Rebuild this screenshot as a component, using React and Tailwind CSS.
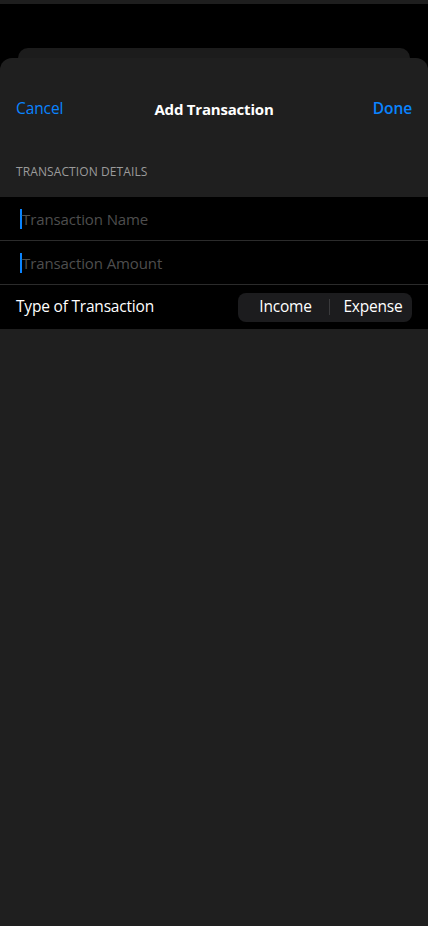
import React from 'react';

const font = { fontFamily: '"Open Sans", "Noto Sans", sans-serif' };

function InputRow({ placeholder }) {
  return (
    <div className="h-[43px] flex items-center pl-5 pt-px">
      <span className="w-[2px] h-5 bg-[#0a84ff]" />
      <span className="text-[15px] text-[#4e4e4e] tracking-[-0.1px]">{placeholder}</span>
    </div>
  );
}

export default function App() {
  return (
    <div className="h-[926px] bg-black flex flex-col overflow-hidden" style={font}>
      <div className="h-1 bg-[#1e1e1e]" />

      {/* stacked sheet behind */}
      <div className="mt-11 mx-[18px] h-[10px] rounded-t-[10px] bg-[#1c1c1c]" />

      {/* Sheet */}
      <div className="flex-1 rounded-t-xl bg-[#1f1f1f]">
        <div className="pt-[29px] px-4 h-[73px] grid grid-cols-[1fr_auto_1fr] items-center">
          <button className="justify-self-start text-[15.5px] text-[#0a84ff] tracking-[-0.1px]">Cancel</button>
          <h1 className="text-[15px] font-bold text-white tracking-[-0.2px]">Add Transaction</h1>
          <button className="justify-self-end text-[15.5px] font-semibold text-[#0a84ff] tracking-[-0.1px]">Done</button>
        </div>

        <p className="mt-[33px] mb-[17px] px-4 text-[12px] leading-4 text-[#9b9b9b] uppercase tracking-[0.1px]">
          Transaction Details
        </p>

        <div className="bg-black">
          <InputRow placeholder="Transaction Name" />
          <div className="h-px bg-[#2b2b2b]" />
          <InputRow placeholder="Transaction Amount" />
          <div className="h-px bg-[#2b2b2b]" />
          <div className="h-[43px] flex items-center justify-between pl-4 pr-4 pt-px">
            <span className="text-[15.5px] text-white tracking-[-0.2px]">Type of Transaction</span>
            <div className="w-[174px] h-[29px] rounded-lg bg-[#1c1c1e] flex items-center">
              <span className="w-[91px] text-center text-[15.5px] text-white tracking-[-0.2px] pl-1">Income</span>
              <span className="w-px h-4 bg-[#3a3a3c]" />
              <span className="flex-1 text-center text-[15.5px] text-white tracking-[-0.2px] pl-1">Expense</span>
            </div>
          </div>
          <div className="h-px ml-4 bg-black" />
        </div>
      </div>
    </div>
  );
}
